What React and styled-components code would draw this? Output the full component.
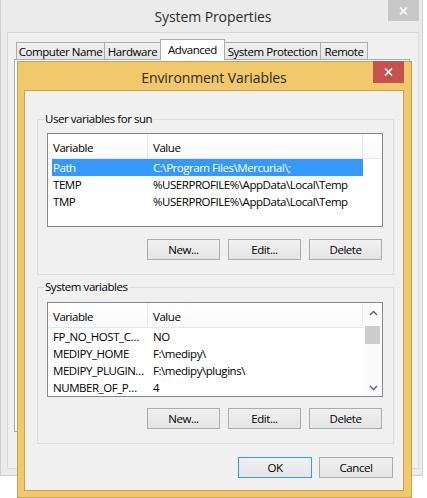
import styled, { createGlobalStyle } from "styled-components";

const GlobalStyle = createGlobalStyle`
  html, body { margin: 0; padding: 0; background: #ffffff; }
  body {
    font-family: "Open Sans", "Noto Sans", "Liberation Sans", sans-serif;
    font-size: 11.5px;
    letter-spacing: -0.45px;
    color: #000;
  }
  *, *::before, *::after { box-sizing: border-box; }
`;

const Desktop = styled.div`
  position: relative;
  width: 427px;
  height: 498px;
  overflow: hidden;
  background: #fff;
`;

// the inactive "System Properties" window behind the dialog
const Window = styled.div`
  display: flex;
  flex-direction: column;
  width: 423px;
  height: 476px;
  padding: 0 3px 6px 6px;
  background: #ebebeb;
  border: 1px solid #d0d0d0;
  border-top: 0;
`;

const TitleBar = styled.div`
  position: relative;
  flex: none;
  display: flex;
  align-items: center;
  justify-content: center;
  height: ${(p) => p.h}px;
  padding-top: ${(p) => p.pt || 0}px;
  font-size: 14px;
  letter-spacing: -0.1px;
  color: #2b2b2b;
`;

const CloseBtn = styled.div`
  position: absolute;
  top: ${(p) => p.top}px;
  right: ${(p) => p.right}px;
  width: 31px;
  height: ${(p) => p.h}px;
  display: flex;
  align-items: center;
  justify-content: center;
  background: ${(p) => p.bg};
`;

const Client = styled.div`
  flex: 1;
  display: flex;
  flex-direction: column;
  padding: 6px 8px 0 6px;
  background: #f0f0f0;
  border: 1px solid #d9d9d9;
`;

const TabStrip = styled.div`
  position: relative;
  z-index: 1;
  display: flex;
  align-items: flex-end;
  height: 20px;
  padding-left: 2px;
`;

const Tab = styled.div`
  position: relative;
  flex: none;
  width: ${(p) => p.w}px;
  height: ${(p) => (p.active ? 21 : 17)}px;
  margin-left: -1px;
  margin-bottom: ${(p) => (p.active ? -1 : 0)}px;
  z-index: ${(p) => (p.active ? 2 : 1)};
  display: flex;
  align-items: center;
  justify-content: center;
  padding-bottom: ${(p) => (p.active ? 2 : 0)}px;
  border: 1px solid #acacac;
  border-bottom: 0;
  background: ${(p) => (p.active ? "#ffffff" : "linear-gradient(#f0f0f0, #e5e5e5)")};
  white-space: nowrap;
  &:first-child { margin-left: 0; }
`;

const TabPanel = styled.div`
  height: 373px;
  background: #ffffff;
  border: 1px solid #acacac;
`;

// the active "Environment Variables" dialog on top
const Dialog = styled.div`
  position: absolute;
  left: 17px;
  top: 61px;
  width: 395px;
  height: 437px;
  display: flex;
  flex-direction: column;
  padding: 0 7px 6px 6px;
  background: #f1c96b;
  border: 1px solid #c9a250;
`;

const DialogBody = styled.div`
  flex: 1;
  display: flex;
  flex-direction: column;
  padding: 28px 9px 0 12px;
  background: #f0f0f0;
  border: 1px solid #c9a250;
`;

const Group = styled.div`
  position: relative;
  flex: none;
  display: flex;
  flex-direction: column;
  height: ${(p) => p.h}px;
  margin-top: ${(p) => p.mt || 0}px;
  padding-top: ${(p) => p.pt}px;
  border: 1px solid #dcdcdc;
`;

const GroupLabel = styled.span`
  position: absolute;
  left: 6px;
  top: -9px;
  padding: 0 1px;
  line-height: 16px;
  background: #f0f0f0;
`;

const ListView = styled.div`
  flex: none;
  display: flex;
  height: ${(p) => p.h}px;
  margin: 0 10px 0 9px;
  border: 1px solid #828790;
  background: #ffffff;
  overflow: hidden;
`;

const ListMain = styled.div`
  flex: 1;
  min-width: 0;
  display: flex;
  flex-direction: column;
`;

const HeaderRow = styled.div`
  flex: none;
  display: flex;
  height: 25px;
  border-bottom: 1px solid #e4e9f0;
  background: linear-gradient(#ffffff, #fafafa);
`;

const HeaderCell = styled.div`
  flex: none;
  width: ${(p) => p.w}px;
  display: flex;
  align-items: center;
  padding: 2px 0 0 5px;
  border-right: 1px solid #e4e9f0;
`;

const Row = styled.div`
  display: grid;
  grid-template-columns: 95px 216px;
  width: 311px;
  height: 17px;
  margin-left: 4px;
  flex: none;
  white-space: nowrap;
  line-height: 17px;
  background: ${(p) => (p.selected ? "#3399ff" : "transparent")};
  color: ${(p) => (p.selected ? "#ffffff" : "#000000")};
`;

const Cell = styled.span`
  overflow: hidden;
  padding-left: ${(p) => p.pad}px;
`;

const ScrollBar = styled.div`
  flex: none;
  width: 18px;
  display: flex;
  flex-direction: column;
  background: #fafafa;
`;

const ScrollArrow = styled.div`
  flex: none;
  height: 17px;
  display: flex;
  align-items: center;
  justify-content: center;
  padding-top: ${(p) => p.pt || 0}px;
`;

const ScrollTrack = styled.div`
  flex: 1;
  padding: 6px 2px 0 1px;
`;

const Thumb = styled.div`
  height: 18px;
  background: #cdcdcd;
`;

const ButtonRow = styled.div`
  flex: none;
  display: flex;
  justify-content: flex-end;
  gap: ${(p) => p.gap}px;
  margin-top: ${(p) => p.mt}px;
  padding-right: ${(p) => p.pr}px;
`;

const Button = styled.button`
  width: ${(p) => p.w}px;
  height: 21px;
  padding: 0;
  font: inherit;
  letter-spacing: inherit;
  color: #000;
  border: 1px solid ${(p) => (p.primary ? "#3399ff" : "#acacac")};
  background: linear-gradient(#f0f0f0, #e5e5e5);
`;

const XIcon = () => (
  <svg width="9" height="8" viewBox="0 0 9 8">
    <path d="M1 0.5 L8 7.5 M8 0.5 L1 7.5" stroke="#fff" strokeWidth="1.7" />
  </svg>
);

const Chevron = ({ up }) => (
  <svg width="9" height="6" viewBox="0 0 9 6">
    <polyline
      points={up ? "1,5 4.5,1.5 8,5" : "1,1 4.5,4.5 8,1"}
      fill="none"
      stroke="#606060"
      strokeWidth="1.4"
    />
  </svg>
);

const tabs = [
  { label: "Computer Name", w: 89 },
  { label: "Hardware", w: 57 },
  { label: "Advanced", w: 65, active: true },
  { label: "System Protection", w: 97 },
  { label: "Remote", w: 48 },
];

const userVars = [
  { name: "Path", value: "C:\\Program Files\\Mercurial\\;", selected: true },
  { name: "TEMP", value: "%USERPROFILE%\\AppData\\Local\\Temp" },
  { name: "TMP", value: "%USERPROFILE%\\AppData\\Local\\Temp" },
];

const systemVars = [
  { name: "FP_NO_HOST_C…", value: "NO" },
  { name: "MEDIPY_HOME", value: "F:\\medipy\\" },
  { name: "MEDIPY_PLUGIN…", value: "F:\\medipy\\plugins\\" },
  { name: "NUMBER_OF_P…", value: "4" },
];

function VarList({ rows, h, scroll }) {
  return (
    <ListView h={h}>
      <ListMain>
        <HeaderRow>
          <HeaderCell w={100}>Variable</HeaderCell>
          <HeaderCell w={215}>Value</HeaderCell>
        </HeaderRow>
        {rows.map((r) => (
          <Row key={r.name} selected={r.selected}>
            <Cell pad={1}>{r.name}</Cell>
            <Cell pad={6}>{r.value}</Cell>
          </Row>
        ))}
      </ListMain>
      {scroll && (
        <ScrollBar>
          <ScrollArrow pt={2}>
            <Chevron up />
          </ScrollArrow>
          <ScrollTrack>
            <Thumb />
          </ScrollTrack>
          <ScrollArrow>
            <Chevron />
          </ScrollArrow>
        </ScrollBar>
      )}
    </ListView>
  );
}

function EditButtons({ mt }) {
  return (
    <ButtonRow gap={8} mt={mt} pr={11}>
      <Button w={73}>New...</Button>
      <Button w={73}>Edit...</Button>
      <Button w={73}>Delete</Button>
    </ButtonRow>
  );
}

export default function App() {
  return (
    <>
      <GlobalStyle />
      <Desktop>
        <Window>
          <TitleBar h={32}>
            System Properties
            <CloseBtn top={0} right={0} h={21} bg="#c7c7c7">
              <XIcon />
            </CloseBtn>
          </TitleBar>
          <Client>
            <TabStrip>
              {tabs.map((t) => (
                <Tab key={t.label} w={t.w} active={t.active}>
                  {t.label}
                </Tab>
              ))}
            </TabStrip>
            <TabPanel />
          </Client>
        </Window>

        <Dialog>
          <TitleBar h={28} pt={2}>
            Environment Variables
            <CloseBtn top={-1} right={0} h={22} bg="#c75050">
              <XIcon />
            </CloseBtn>
          </TitleBar>
          <DialogBody>
            <Group h={156} pt={13}>
              <GroupLabel>User variables for sun</GroupLabel>
              <VarList rows={userVars} h={94} />
              <EditButtons mt={12} />
            </Group>
            <Group h={157} pt={14} mt={12}>
              <GroupLabel>System variables</GroupLabel>
              <VarList rows={systemVars} h={95} scroll />
              <EditButtons mt={11} />
            </Group>
            <ButtonRow gap={7} mt={13} pr={1}>
              <Button w={74} primary>
                OK
              </Button>
              <Button w={74}>Cancel</Button>
            </ButtonRow>
          </DialogBody>
        </Dialog>
      </Desktop>
    </>
  );
}
